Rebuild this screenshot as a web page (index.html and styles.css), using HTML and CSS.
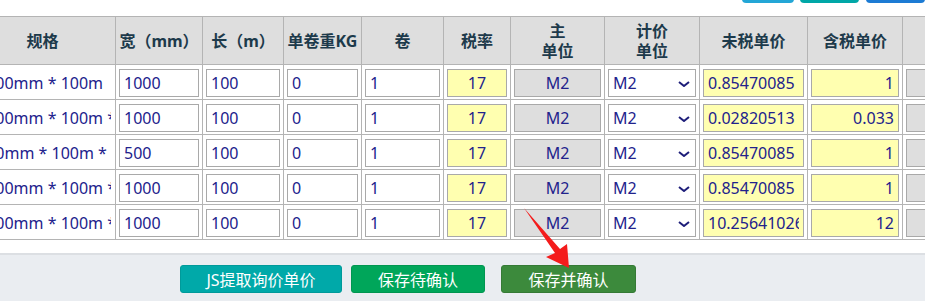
FILE: index.html
```html
<!DOCTYPE html>
<html lang="zh-CN">
<head>
  <meta charset="UTF-8">
  <meta name="viewport" content="width=device-width, initial-scale=1.0">
  <title>询价明细</title>
  <link rel="stylesheet" href="styles.css">
</head>
<body>
  <div class="topbar">
    <span class="tb tb-sky"></span>
    <span class="tb tb-teal"></span>
    <span class="tb tb-blue"></span>
  </div>

  <div class="grid-wrap">
    <table class="grid">
      <colgroup>
        <col class="c-spec">
        <col class="c-w">
        <col class="c-l">
        <col class="c-kg">
        <col class="c-roll">
        <col class="c-tax">
        <col class="c-unit">
        <col class="c-punit">
        <col class="c-net">
        <col class="c-gross">
        <col class="c-more">
      </colgroup>
      <thead>
        <tr>
          <th>规格</th>
          <th>宽（mm）</th>
          <th>长（m）</th>
          <th>单卷重KG</th>
          <th>卷</th>
          <th>税率</th>
          <th>主<br>单位</th>
          <th>计价<br>单位</th>
          <th>未税单价</th>
          <th>含税单价</th>
          <th></th>
        </tr>
      </thead>
      <tbody>
        <tr>
          <td><div class="spec">1000mm * 100m</div></td>
          <td><input class="in" value="1000"></td>
          <td><input class="in" value="100"></td>
          <td><input class="in" value="0"></td>
          <td><input class="in" value="1"></td>
          <td><input class="in ro center" value="17" readonly></td>
          <td><input class="in gray center" value="M2" readonly></td>
          <td><div class="sel"><select><option>M2</option></select><svg class="chev" viewBox="0 0 12 6"><path d="M1 1 L6 5 L11 1"/></svg></div></td>
          <td><input class="in ro" value="0.85470085" readonly></td>
          <td><input class="in ro right" value="1" readonly></td>
          <td><input class="in gray" readonly></td>
        </tr>
        <tr>
          <td><div class="spec">1000mm * 100m * 0.033</div></td>
          <td><input class="in" value="1000"></td>
          <td><input class="in" value="100"></td>
          <td><input class="in" value="0"></td>
          <td><input class="in" value="1"></td>
          <td><input class="in ro center" value="17" readonly></td>
          <td><input class="in gray center" value="M2" readonly></td>
          <td><div class="sel"><select><option>M2</option></select><svg class="chev" viewBox="0 0 12 6"><path d="M1 1 L6 5 L11 1"/></svg></div></td>
          <td><input class="in ro" value="0.02820513" readonly></td>
          <td><input class="in ro right" value="0.033" readonly></td>
          <td><input class="in gray" readonly></td>
        </tr>
        <tr>
          <td><div class="spec">500mm * 100m * 1</div></td>
          <td><input class="in" value="500"></td>
          <td><input class="in" value="100"></td>
          <td><input class="in" value="0"></td>
          <td><input class="in" value="1"></td>
          <td><input class="in ro center" value="17" readonly></td>
          <td><input class="in gray center" value="M2" readonly></td>
          <td><div class="sel"><select><option>M2</option></select><svg class="chev" viewBox="0 0 12 6"><path d="M1 1 L6 5 L11 1"/></svg></div></td>
          <td><input class="in ro" value="0.85470085" readonly></td>
          <td><input class="in ro right" value="1" readonly></td>
          <td><input class="in gray" readonly></td>
        </tr>
        <tr>
          <td><div class="spec">1000mm * 100m * 1</div></td>
          <td><input class="in" value="1000"></td>
          <td><input class="in" value="100"></td>
          <td><input class="in" value="0"></td>
          <td><input class="in" value="1"></td>
          <td><input class="in ro center" value="17" readonly></td>
          <td><input class="in gray center" value="M2" readonly></td>
          <td><div class="sel"><select><option>M2</option></select><svg class="chev" viewBox="0 0 12 6"><path d="M1 1 L6 5 L11 1"/></svg></div></td>
          <td><input class="in ro" value="0.85470085" readonly></td>
          <td><input class="in ro right" value="1" readonly></td>
          <td><input class="in gray" readonly></td>
        </tr>
        <tr>
          <td><div class="spec">1000mm * 100m * 12</div></td>
          <td><input class="in" value="1000"></td>
          <td><input class="in" value="100"></td>
          <td><input class="in" value="0"></td>
          <td><input class="in" value="1"></td>
          <td><input class="in ro center" value="17" readonly></td>
          <td><input class="in gray center" value="M2" readonly></td>
          <td><div class="sel"><select><option>M2</option></select><svg class="chev" viewBox="0 0 12 6"><path d="M1 1 L6 5 L11 1"/></svg></div></td>
          <td><input class="in ro" value="10.25641026" readonly></td>
          <td><input class="in ro right" value="12" readonly></td>
          <td><input class="in gray" readonly></td>
        </tr>
      </tbody>
    </table>
  </div>

  <div class="footer">
    <button type="button" class="btn btn-teal">JS提取询价单价</button>
    <button type="button" class="btn btn-green">保存待确认</button>
    <button type="button" class="btn btn-dark">保存并确认</button>
  </div>

  <!-- annotation arrow drawn over the screenshot -->
  <svg class="arrow" width="60" height="70" viewBox="0 0 60 70">
    <polygon points="2,0 38,41 45,36 47,60 24,49 33,45"/>
  </svg>
</body>
</html>
```

FILE: styles.css
```css
* {
  box-sizing: border-box;
}

body {
  margin: 0;
  width: 925px;
  height: 301px;
  overflow: hidden;
  position: relative;
  background: #fff;
  font-family: "Noto Sans", "Noto Sans CJK SC", sans-serif;
  font-size: 16px;
  color: #22228c;
}

/* buttons of the toolbar above, only their bottom edge shows */
.topbar {
  height: 16px;
  display: flex;
  gap: 6px;
  padding-left: 742px;
}

.tb {
  display: block;
  height: 30px;
  margin-top: -27px;
  border-radius: 4px;
}

.tb-sky { width: 70px; background: #23a6d6; }
.tb-teal { width: 80px; background: #00a7a7; }
.tb-blue { width: 80px; background: #1c7bd4; margin-left: 1px; }

.grid-wrap {
  width: 925px;
  overflow: hidden;
}

.grid {
  margin-left: -31px;
  border-collapse: collapse;
  table-layout: fixed;
  width: 1016px;
}

.c-spec { width: 146px; }
.c-w { width: 87px; }
.c-l { width: 81px; }
.c-kg { width: 78px; }
.c-roll { width: 82px; }
.c-tax { width: 67px; }
.c-unit { width: 94px; }
.c-punit { width: 95px; }
.c-net { width: 108px; }
.c-gross { width: 95px; }
.c-more { width: 83px; }

.grid th,
.grid td {
  border: 1px solid #b4b4b4;
}

.grid th {
  height: 48px;
  padding: 0 2px;
  background: #dedede;
  color: #1d3a4b;
  font-weight: bold;
  line-height: 20px;
  text-align: center;
  white-space: nowrap;
}

.grid td {
  height: 35px;
  padding: 3px 3px 2px;
}

.spec {
  padding-left: 4px;
  white-space: nowrap;
  overflow: hidden;
  margin-right: 1px;
}

.in {
  display: block;
  width: 100%;
  height: 28px;
  padding: 0 4px;
  border: 1px solid #a9a9a9;
  background: #fff;
  font: inherit;
  color: #22228c;
  outline: none;
}

.in.ro { background: #ffffb0; }
.in.gray { background: #dedede; }
.in.center { text-align: center; }
.in.right { text-align: right; }

.sel {
  position: relative;
}

.sel select {
  display: block;
  width: 100%;
  height: 28px;
  padding: 0 4px;
  border: 1px solid #a9a9a9;
  border-radius: 0;
  background: #fff;
  font: inherit;
  color: #22228c;
  appearance: none;
  -webkit-appearance: none;
}

.chev {
  position: absolute;
  right: 6px;
  top: 12px;
  width: 12px;
  height: 6px;
  fill: none;
  stroke: #1e1e7a;
  stroke-width: 2;
}

.footer {
  margin-top: 13px;
  height: 50px;
  border-top: 2px solid #dcdfe3;
  background: #eaedf1;
  padding: 10px 0 0 180px;
  display: flex;
  align-items: flex-start;
}

.btn {
  height: 28px;
  padding: 0;
  border-radius: 3px;
  font: inherit;
  color: #fff;
  cursor: pointer;
}

.btn-teal {
  width: 162px;
  background: #00a9a9;
  border: 1px solid #009a9a;
}

.btn-green {
  width: 134px;
  margin-left: 9px;
  background: #00a65a;
  border: 1px solid #009650;
}

.btn-dark {
  width: 135px;
  margin-left: 16px;
  background: #3c8a3c;
  border: 1px solid #357a35;
}

.arrow {
  position: absolute;
  left: 522px;
  top: 208px;
  fill: #f41c1c;
}
```
